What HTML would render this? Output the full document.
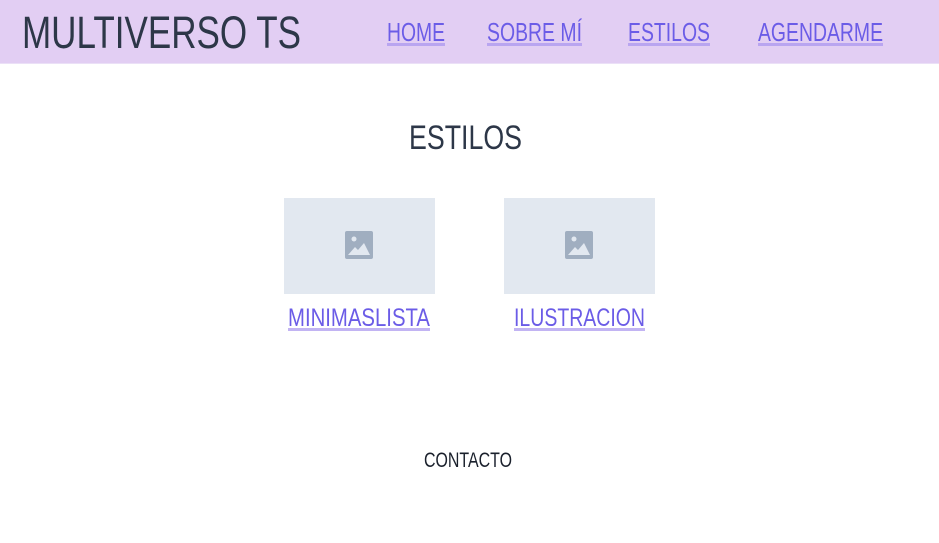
<!DOCTYPE html>
<html><head><meta charset="utf-8"><style>
html,body{margin:0;padding:0;background:#fff;width:939px;height:543px;overflow:hidden}
svg{display:block}
text{font-family:"Liberation Sans",sans-serif}
</style></head><body>
<svg width="939" height="543" viewBox="0 0 939 543" xmlns="http://www.w3.org/2000/svg">
<rect x="0" y="0" width="939" height="64" fill="#e2cef3"/>
<rect x="0" y="63" width="939" height="1" fill="#ebe0f7"/>
<text x="22" y="48" font-size="45" fill="#2d3748" textLength="279" lengthAdjust="spacingAndGlyphs">MULTIVERSO TS</text>
<g fill="#6b5ce7" font-size="26">
<text x="387" y="41" textLength="58" lengthAdjust="spacingAndGlyphs">HOME</text>
<text x="487" y="41" textLength="95" lengthAdjust="spacingAndGlyphs">SOBRE MÍ</text>
<text x="628" y="41" textLength="82" lengthAdjust="spacingAndGlyphs">ESTILOS</text>
<text x="758" y="41" textLength="125" lengthAdjust="spacingAndGlyphs">AGENDARME</text>
</g>
<g fill="#b9a5f0">
<rect x="387" y="43" width="58" height="3"/>
<rect x="487" y="43" width="95" height="3"/>
<rect x="628" y="43" width="82" height="3"/>
<rect x="758" y="43" width="125" height="3"/>
</g>
<text x="409" y="149" font-size="34" fill="#2d3748" textLength="113" lengthAdjust="spacingAndGlyphs">ESTILOS</text>
<rect x="284" y="198" width="151" height="96" fill="#e2e8f0"/>
<rect x="504" y="198" width="151" height="96" fill="#e2e8f0"/>
<g fill="#a0aec0">
<rect x="345" y="231" width="28" height="28" rx="2"/>
<rect x="565" y="231" width="28" height="28" rx="2"/>
</g>
<g fill="#e2e8f0">
<circle cx="354" cy="239" r="2.5"/><path d="M348 255 L355 247 L358 250 L364 243 L370 255 Z"/>
<circle cx="574" cy="239" r="2.5"/><path d="M568 255 L575 247 L578 250 L584 243 L590 255 Z"/>
</g>
<g fill="#6b5ce7" font-size="25">
<text x="288" y="326" textLength="142" lengthAdjust="spacingAndGlyphs">MINIMASLISTA</text>
<text x="514" y="326" textLength="131" lengthAdjust="spacingAndGlyphs">ILUSTRACION</text>
</g>
<g fill="#c2b4f3">
<rect x="288" y="328" width="142" height="3"/>
<rect x="514" y="328" width="131" height="3"/>
</g>
<text x="424" y="467" font-size="21" fill="#1a202c" textLength="88" lengthAdjust="spacingAndGlyphs">CONTACTO</text>
</svg>
</body></html>
